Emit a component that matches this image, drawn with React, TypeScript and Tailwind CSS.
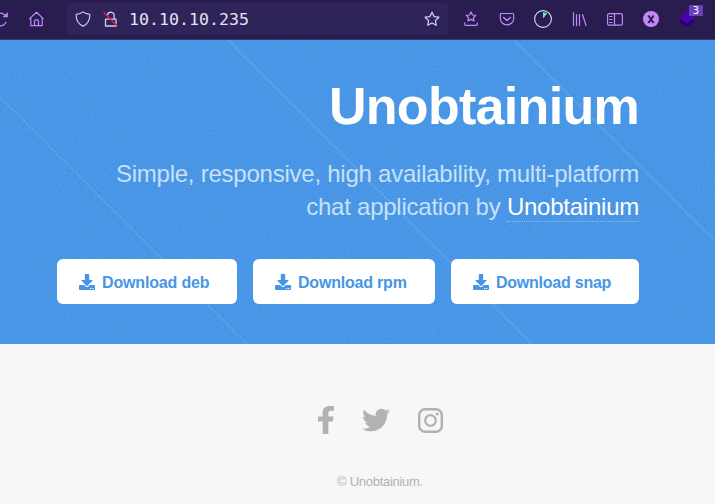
import type { ReactNode } from 'react';
import { FaTwitter } from 'react-icons/fa';

const STAR =
  'M8 1.2l2.1 4.4 4.8.6-3.5 3.3.9 4.8L8 12l-4.3 2.3.9-4.8L1.1 6.2l4.8-.6z';

function Icon({ children, className = '' }: { children: ReactNode; className?: string }) {
  return (
    <svg
      viewBox="0 0 16 16"
      fill="none"
      stroke="currentColor"
      strokeWidth="1.2"
      strokeLinecap="round"
      strokeLinejoin="round"
      className={`size-4 shrink-0 ${className}`}
    >
      {children}
    </svg>
  );
}

function Toolbar() {
  return (
    <header className="flex h-10 items-start border-b border-[#453768] bg-[#291d4f] text-[#c188fb]">
      <div className="flex h-[38px] w-[67px] shrink-0 items-center">
        <Icon className="-ml-2">
          <path d="M14 11.2A6.4 6.4 0 1 1 12.6 3.8" />
          <path d="M15.8 1v5.3h-5.3z" fill="currentColor" stroke="none" />
        </Icon>
        <Icon className="ml-5">
          <path d="M1.6 7.6L8.500 1.300l6.700 6.300M2.800 7v7.600h11.400V7M6.500 14.400v-3.800a2 2 0 0 1 4 0v3.800" />
        </Icon>
      </div>
      <div className="mt-[3px] flex h-8 w-[381px] shrink-0 items-center rounded bg-[#2f245a] pl-2 pr-2 text-[#d3cae9]">
        <Icon>
          <path d="M8 .9C6.2 2.3 4 3 1.300 3.300c-.5 5.300 2 9.400 6.700 12 4.700-2.600 7.200-6.700 6.700-12C12 3 9.800 2.300 8 .9z" />
        </Icon>
        <Icon className="ml-3">
          <path d="M4.500 4.200a3.300 3.300 0 0 1 6.600.8v3M2.500 8.100h10.500v6.900H2.500z" strokeWidth="1.300" />
          <path d="M1 1.700L14.200 15" stroke="#e31b54" strokeWidth="1.400" />
        </Icon>
        <span className="relative top-px ml-[10px] grow font-['DejaVu_Sans_Mono',monospace] text-[16.6px] leading-none text-[#e6e1f4]">
          10.10.10.235
        </span>
        <Icon>
          <path d={STAR} strokeWidth="1.300" />
        </Icon>
      </div>
      <div className="flex h-[38px] grow items-center pl-[15px]">
        <Icon>
          <path d="M8 1l1.500 3 3.300.400-2.400 2.300.600 3.200L8 8.400 5 9.900l.600-3.200-2.400-2.300L6.500 4z" />
          <path d="M1.700 11.800v1.500c0 .6.400 1 1 1h10.600c.600 0 1-.4 1-1v-1.500" />
        </Icon>
        <Icon className="ml-5">
          <path d="M2.200 2.500h11.600c.5 0 .9.400.9.900v4c0 3.600-2.900 6.500-6.700 6.500S1.300 11 1.300 7.400v-4c0-.5.400-.9.900-.9z" />
          <path d="M4.600 6.500L8 9.500l3.400-3" strokeWidth="1.400" />
        </Icon>
        <svg viewBox="0 0 18 18" className="ml-[19px] size-[18px] shrink-0" fill="none">
          <circle cx="9" cy="9" r="8.400" stroke="#e4d8f2" strokeWidth="1.100" />
          <path d="M9 8.500V2.200c1.700 0 3.200.5 4.200 1.500z" fill="#49f0b7" />
        </svg>
        <Icon className="ml-5">
          <path d="M1.500 1.500v13M4.500 3.500v11M7.500 3.500v11M10.500 3.500l3.500 11" />
        </Icon>
        <Icon className="ml-[19px]">
          <rect x=".6" y="2.600" width="14.800" height="11.600" rx="1.500" />
          <path d="M7.500 2.600v11.600M2.700 5.500H5M2.700 8.500H5M2.700 11.500H5" />
        </Icon>
        <svg viewBox="0 0 16 16" className="ml-5 size-4 shrink-0">
          <circle cx="8" cy="8" r="8" fill="#c188fb" />
          <path d="M5.700 5l4.600 6.600M10.300 5l-4.600 6.600" stroke="#291d4f" strokeWidth="1.900" />
          <path d="M4.700 5h2.200M9.100 5h2.200M4.700 11.600h2.200M9.100 11.600h2.200" stroke="#291d4f" strokeWidth="1" />
        </svg>
        <div className="relative ml-5 size-4 shrink-0">
          <svg viewBox="0 0 16 16" className="size-4">
            <path d="M0 10.500L3 8h10l3 2.500-8 5.500z" fill="#220075" />
            <path d="M8 0l8 6.500-8 6L0 6.500z" fill="#4a00ad" />
          </svg>
          <span className="absolute -top-[6px] left-[10px] flex h-[11px] w-[14px] items-center justify-center rounded-[1px] bg-[#6b3fb9] font-['DejaVu_Sans',sans-serif] text-[10px] leading-none text-white">
            3
          </span>
        </div>
      </div>
    </header>
  );
}

/* Fine grain and widely spaced diagonal strokes behind the hero text. */
function HeroTexture() {
  return (
    <svg className="pointer-events-none absolute inset-0 size-full" viewBox="0 0 715 304">
      <filter id="grain" x="0" y="0" width="100%" height="100%" colorInterpolationFilters="sRGB">
        <feTurbulence type="fractalNoise" baseFrequency="0.65" numOctaves="2" seed="4" />
        <feColorMatrix values="0 0 0 0 0.1  0 0 0 0 0.38  0 0 0 0 0.7  0.36 0 0 0 -0.12" />
      </filter>
      <rect width="715" height="304" filter="url(#grain)" />
      <path
        d="M-1 56L247 304M228 0l304 304M514 0l202 202"
        stroke="#73c4ef"
        strokeOpacity=".32"
        strokeWidth="1.500"
      />
    </svg>
  );
}

function FacebookGlyph() {
  return (
    <svg
      viewBox="0 0 264 512"
      preserveAspectRatio="none"
      fill="currentColor"
      className="relative -top-px h-7 w-4"
    >
      <path d="M76.7 512V283H0v-91h76.7v-71.7C76.7 42.4 124.3 0 193.8 0c33.3 0 61.9 2.5 70.2 3.6V85h-48.200c-37.800 0-45.100 18-45.100 44.300V192H256l-11.700 91h-73.600v229z" />
    </svg>
  );
}

function InstagramGlyph() {
  return (
    <svg viewBox="0 0 25 25" fill="none" stroke="currentColor" className="ml-7 size-[25px]">
      <rect x="1.200" y="1.200" width="22.600" height="22.600" rx="6" strokeWidth="2.400" />
      <circle cx="12.500" cy="12.500" r="5.300" strokeWidth="2.300" />
      <circle cx="19.200" cy="5.900" r="1.500" fill="currentColor" stroke="none" />
    </svg>
  );
}

function DownloadGlyph() {
  return (
    <svg viewBox="0 0 16 16" fill="currentColor" className="mt-px mr-[7px] size-4">
      <path d="M6.500 0h3q.7 0 .7.700V6h2.900q.9 0 .4.800L8.600 11.700q-.6.600-1.200 0L2.500 6.800Q2 6 2.900 6h2.900V.7q0-.7.700-.7z" />
      <path
        fillRule="evenodd"
        d="M.8 11h4.400l1.600 1.600q1.200 1 2.400 0L10.800 11h4.400q.8 0 .8.800v3.400q0 .8-.8.800H.8q-.8 0-.8-.8v-3.400q0-.8.800-.8zM11 14v1h1.200v-1zM13.200 14v1h1.200v-1z"
      />
    </svg>
  );
}

function DownloadButton({ label, className }: { label: string; className: string }) {
  return (
    <a
      className={`flex h-[45px] items-center rounded-[6px] bg-white text-[16px] font-bold whitespace-nowrap text-[#4696e5] ${className}`}
    >
      <DownloadGlyph />
      <span className="relative top-px">{label}</span>
    </a>
  );
}

export default function App() {
  return (
    <div className="h-[504px] w-[715px] overflow-hidden bg-[#f7f7f7] font-['Liberation_Sans',Arial,sans-serif]">
      <Toolbar />
      <section className="relative h-[304px] bg-[#4c9ae9] pr-[76px] pl-[57px]">
        <HeroTexture />
        <div className="relative flex flex-col items-end text-right">
          <h1 className="mt-9 text-[52px] leading-[60px] font-bold tracking-[-0.7px] text-white">
            Unobtainium
          </h1>
          <p className="mt-[21px] text-[24px] leading-[33px] tracking-[-0.01em] text-[#c9e0f8]">
            Simple, responsive, high availability, multi-platform
            <br />
            chat application by{' '}
            <a className="border-b border-dotted border-[#93c2f1] pb-px text-white">Unobtainium</a>
          </p>
          <div className="mt-9 flex gap-4">
            <DownloadButton label="Download deb" className="w-[180px] pl-[22px] tracking-[-0.16px]" />
            <DownloadButton label="Download rpm" className="w-[182px] pl-[22px] tracking-[-0.2px]" />
            <DownloadButton label="Download snap" className="w-[188px] pl-[22px] tracking-[-0.24px]" />
          </div>
        </div>
      </section>
      <footer className="flex flex-col items-center pl-[45px] text-[#b2b2b2]">
        <div className="mt-[62px] flex h-[29px] items-center">
          <FacebookGlyph />
          <FaTwitter className="relative -top-px ml-7 size-7" />
          <InstagramGlyph />
        </div>
        <p className="mt-[39px] text-[13px] leading-[15px] tracking-[-0.28px]">© Unobtainium.</p>
      </footer>
    </div>
  );
}
